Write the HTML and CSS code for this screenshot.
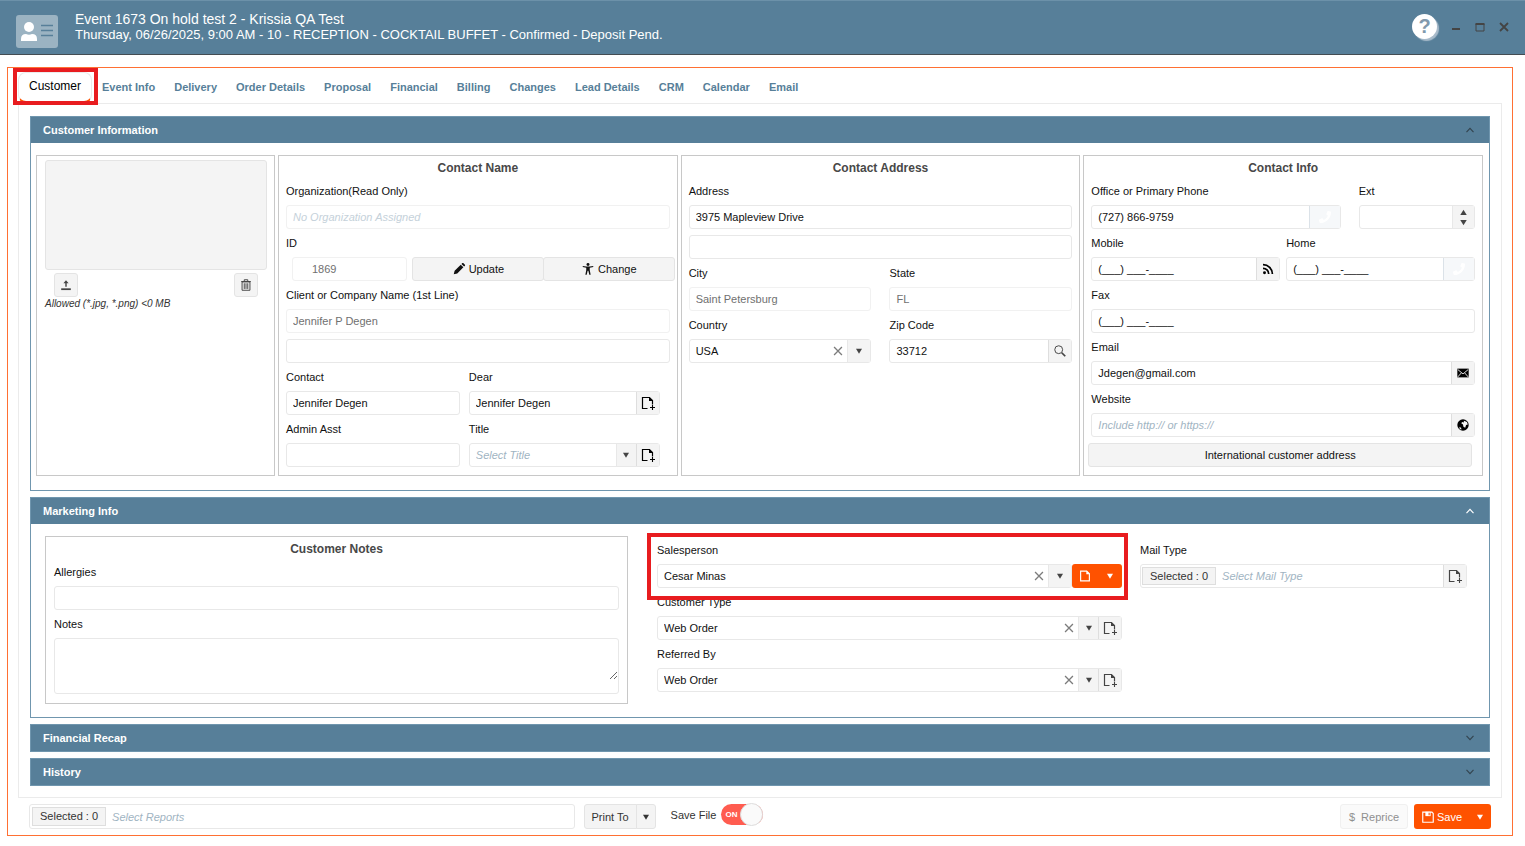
FILE: index.html
```html
<!DOCTYPE html>
<html lang="en">
<head>
  <meta charset="UTF-8">
  <meta name="viewport" content="width=device-width, initial-scale=1.0">
  <title>Event 1673 - Customer</title>
  <link rel="stylesheet" href="styles.css">
</head>
<body>
  <!-- icon set -->
  <svg class="sprite" aria-hidden="true">
    <symbol id="i-add" viewBox="0 0 16 16"><path d="M7.500 13.500h-5v-11h7l3 3v4" fill="none" stroke="currentColor" stroke-width="1.200"/><path d="M9 2v4h4z" fill="currentColor"/><path d="M12.500 10v5M10 12.500h5" stroke="currentColor" stroke-width="1.100"/></symbol>
    <symbol id="i-file" viewBox="0 0 16 16"><path d="M3 2.500h7l3 3v8H3z" fill="none" stroke="currentColor" stroke-width="1.300"/><path d="M9.500 2v4h4z" fill="currentColor"/></symbol>
    <symbol id="i-down" viewBox="0 0 16 16"><path d="M4 5h8l-4 6.500z" fill="currentColor"/></symbol>
    <symbol id="i-x" viewBox="0 0 16 16"><path d="M3.500 3.500l9 9M12.500 3.500l-9 9" fill="none" stroke="currentColor" stroke-width="1.500"/></symbol>
    <symbol id="i-chev" viewBox="0 0 16 16"><path d="M4 10.500l4-4.500 4 4.500" fill="none" stroke="currentColor" stroke-width="1.300"/></symbol>
    <symbol id="i-phone" viewBox="0 0 512 512"><path d="M493.400 24.600l-104-24c-11.300-2.600-22.900 3.300-27.500 13.900l-48 112c-4.200 9.800-1.400 21.300 6.900 28l60.600 49.600c-36 76.700-98.900 140.500-177.200 177.200l-49.600-60.600c-6.800-8.300-18.200-11.100-28-6.900l-112 48C3.900 366.500-2 378.100.6 389.400l24 104C27.100 504.200 36.700 512 48 512c256.100 0 464-207.500 464-464 0-11.200-7.700-20.900-18.600-23.400z" fill="currentColor"/></symbol>
    <symbol id="i-rss" viewBox="0 0 16 16"><circle cx="4" cy="12.300" r="1.700" fill="currentColor"/><path d="M2.300 7.200a6.500 6.500 0 0 1 6.500 6.500M2.300 3a10.700 10.700 0 0 1 10.700 10.700" fill="none" stroke="currentColor" stroke-width="2"/></symbol>
    <symbol id="i-mail" viewBox="0 0 16 16"><rect x="1.500" y="3" width="13" height="10" fill="currentColor"/><path d="M2 4l6 5 6-5M2 12.500l4-4.500M14 12.500L10 8" fill="none" stroke="#f4f4f4"/></symbol>
    <symbol id="i-globe" viewBox="0 0 16 16"><circle cx="8" cy="8" r="6.500" fill="currentColor"/><path d="M9 3l3.500 1.500 1 3-2 .5-1 3-2-1-.5-2.500-2-1.500 1-1.500L9 5zM4 10l2 1.500v2L4 12z" fill="#f4f4f4"/></symbol>
    <symbol id="i-search" viewBox="0 0 16 16"><circle cx="6.500" cy="6.500" r="4.500" fill="none" stroke="currentColor" stroke-width="1.100"/><path d="M10 10l4 4" stroke="currentColor" stroke-width="2"/></symbol>
    <symbol id="i-pencil" viewBox="0 0 16 16"><path d="M2 14l1-4 7-7 3 3-7 7zM10.800 2.200l1-1q.5-.4 1 0l2 2q.4.500 0 1l-1 1z" fill="currentColor"/></symbol>
    <symbol id="i-person" viewBox="0 0 16 16"><circle cx="8" cy="2.800" r="1.700" fill="currentColor"/><path d="M2 4.500l4 .5h4l4-.5v1.300l-4 .8V9l1 5.500H9.500L8.400 10h-.8L6.500 14.500H5L6 9V6.600l-4-.8z" fill="currentColor"/></symbol>
    <symbol id="i-upload" viewBox="0 0 16 16"><path d="M7.200 10V6H5l3-3.500L11 6H8.800v4z" fill="currentColor"/><path d="M2.500 12.800h11" stroke="currentColor" stroke-width="2"/></symbol>
    <symbol id="i-trash" viewBox="0 0 16 16"><path d="M3.500 4.500h9v9.500h-9zM2.500 4h11M6 3.500V2h4v1.500M6 6v6.500M8 6v6.500M10 6v6.500" fill="none" stroke="currentColor" stroke-width="1.100"/></symbol>
    <symbol id="i-save" viewBox="0 0 16 16"><path d="M2 2.500h10.500l1.500 1.500v10H2z" fill="none" stroke="currentColor" stroke-width="1.300"/><path d="M5 2h6v5H5z" fill="currentColor"/><path d="M9.300 3v3" stroke="#ff5200" stroke-width="1.300"/></symbol>
  </svg>

  <header class="titlebar">
    <svg class="card-icon" viewBox="0 0 42 33" aria-hidden="true">
      <rect width="42" height="33" rx="3" fill="#9bb3c2"/>
      <circle cx="13" cy="12" r="5" fill="#fff"/>
      <path d="M5 26v-2q0-5 5-5 3 1.500 6 0 5 0 5 5v2z" fill="#fff"/>
      <path d="M25 10.500h12M25 15.500h12M25 20.500h12" stroke="#577f99" stroke-width="1.600"/>
    </svg>
    <div class="event-title">
      <h1>Event 1673 On hold test 2 - Krissia QA Test</h1>
      <p>Thursday, 06/26/2025, 9:00 AM - 10 - RECEPTION - COCKTAIL BUFFET - Confirmed - Deposit Pend.</p>
    </div>
    <div class="window-actions">
      <button type="button" class="help" aria-label="Help">?</button>
      <button type="button" aria-label="Minimize"><svg viewBox="0 0 10 10"><path d="M1 7h8" stroke="currentColor" stroke-width="2"/></svg></button>
      <button type="button" aria-label="Maximize"><svg viewBox="0 0 10 10"><path d="M1 2h8v7H1z" fill="none" stroke="currentColor"/><path d="M.5 2h9" stroke="currentColor" stroke-width="2"/></svg></button>
      <button type="button" aria-label="Close"><svg viewBox="0 0 10 10"><path d="M1 1l8 8M9 1l-8 8" stroke="currentColor" stroke-width="1.800"/></svg></button>
    </div>
  </header>

  <main class="frame">
    <nav class="tabs">
      <a href="#customer" class="active highlight">Customer</a>
      <a href="#event">Event Info</a>
      <a href="#delivery">Delivery</a>
      <a href="#order">Order Details</a>
      <a href="#proposal">Proposal</a>
      <a href="#financial">Financial</a>
      <a href="#billing">Billing</a>
      <a href="#changes">Changes</a>
      <a href="#lead">Lead Details</a>
      <a href="#crm">CRM</a>
      <a href="#calendar">Calendar</a>
      <a href="#email">Email</a>
    </nav>

    <div class="tab-content" id="customer">
      <section class="panel">
        <h2><button type="button">Customer Information <svg class="icon"><use href="#i-chev"/></svg></button></h2>
        <div class="info-grid">
          <div class="box photo">
            <div class="photo-area"></div>
            <div class="photo-actions">
              <button type="button" class="btn icon-btn" aria-label="Upload"><svg class="icon"><use href="#i-upload"/></svg></button>
              <button type="button" class="btn icon-btn" aria-label="Delete"><svg class="icon"><use href="#i-trash"/></svg></button>
            </div>
            <p>Allowed (*.jpg, *.png) &lt;0 MB</p>
          </div>

          <div class="box">
            <h3>Contact Name</h3>
            <label for="org">Organization(Read Only)</label>
            <div class="control disabled"><input id="org" type="text" placeholder="No Organization Assigned" disabled></div>
            <label for="cid">ID</label>
            <div class="id-row">
              <div class="control disabled"><input id="cid" type="text" value="1869" disabled></div>
              <button type="button" class="btn"><svg class="icon"><use href="#i-pencil"/></svg>Update</button>
              <button type="button" class="btn"><svg class="icon"><use href="#i-person"/></svg>Change</button>
            </div>
            <label for="client">Client or Company Name (1st Line)</label>
            <div class="control disabled"><input id="client" type="text" value="Jennifer P Degen" disabled></div>
            <div class="control second"><input type="text" aria-label="Client name, second line"></div>
            <div class="row contact-row">
              <div>
                <label for="contact">Contact</label>
                <div class="control"><input id="contact" type="text" value="Jennifer Degen"></div>
              </div>
              <div>
                <label for="dear">Dear</label>
                <div class="control"><input id="dear" type="text" value="Jennifer Degen"><button type="button" class="addon" aria-label="Add greeting"><svg class="icon add"><use href="#i-add"/></svg></button></div>
              </div>
              <div>
                <label for="admin">Admin Asst</label>
                <div class="control"><input id="admin" type="text"></div>
              </div>
              <div>
                <label for="title">Title</label>
                <div class="control">
                  <select id="title" class="empty"><option>Select Title</option></select>
                  <button type="button" class="arrow" aria-label="Open titles"><svg class="icon"><use href="#i-down"/></svg></button>
                  <button type="button" class="addon" aria-label="Add title"><svg class="icon add"><use href="#i-add"/></svg></button>
                </div>
              </div>
            </div>
          </div>

          <div class="box">
            <h3>Contact Address</h3>
            <label for="address">Address</label>
            <div class="control"><input id="address" type="text" value="3975 Mapleview Drive"></div>
            <div class="control second"><input type="text" aria-label="Address, second line"></div>
            <div class="row address-row">
              <div>
                <label for="city">City</label>
                <div class="control disabled"><input id="city" type="text" value="Saint Petersburg" disabled></div>
              </div>
              <div>
                <label for="state">State</label>
                <div class="control disabled"><input id="state" type="text" value="FL" disabled></div>
              </div>
              <div>
                <label for="country">Country</label>
                <div class="control">
                  <select id="country"><option>USA</option></select>
                  <button type="button" class="clear" aria-label="Clear country"><svg class="icon"><use href="#i-x"/></svg></button>
                  <button type="button" class="arrow wide" aria-label="Open countries"><svg class="icon"><use href="#i-down"/></svg></button>
                </div>
              </div>
              <div>
                <label for="zip">Zip Code</label>
                <div class="control"><input id="zip" type="text" value="33712"><button type="button" class="addon gray" aria-label="Search zip"><svg class="icon"><use href="#i-search"/></svg></button></div>
              </div>
            </div>
          </div>

          <div class="box">
            <h3>Contact Info</h3>
            <div class="row phone-row">
              <div>
                <label for="office">Office or Primary Phone</label>
                <div class="control"><input id="office" type="tel" value="(727) 866-9759"><button type="button" class="addon call" aria-label="Call office" disabled><svg class="icon small"><use href="#i-phone"/></svg></button></div>
              </div>
              <div>
                <label for="ext">Ext</label>
                <div class="control">
                  <input id="ext" type="text">
                  <div class="spinner">
                    <button type="button" aria-label="Increase"><svg class="icon flip"><use href="#i-down"/></svg></button>
                    <button type="button" aria-label="Decrease"><svg class="icon"><use href="#i-down"/></svg></button>
                  </div>
                </div>
              </div>
            </div>
            <div class="row mobile-row">
              <div>
                <label for="mobile">Mobile</label>
                <div class="control"><input id="mobile" type="tel" value="(___) ___-____"><button type="button" class="addon" aria-label="Text mobile"><svg class="icon"><use href="#i-rss"/></svg></button></div>
              </div>
              <div>
                <label for="home">Home</label>
                <div class="control"><input id="home" type="tel" value="(___) ___-____"><button type="button" class="addon call" aria-label="Call home" disabled><svg class="icon small"><use href="#i-phone"/></svg></button></div>
              </div>
            </div>
            <label for="fax">Fax</label>
            <div class="control"><input id="fax" type="tel" value="(___) ___-____"></div>
            <label for="mail">Email</label>
            <div class="control"><input id="mail" type="email" value="Jdegen@gmail.com"><button type="button" class="addon" aria-label="Send email"><svg class="icon"><use href="#i-mail"/></svg></button></div>
            <label for="website">Website</label>
            <div class="control"><input id="website" type="url" placeholder="Include http:// or https://"><button type="button" class="addon" aria-label="Open website"><svg class="icon"><use href="#i-globe"/></svg></button></div>
            <button type="button" class="btn international">International customer address</button>
          </div>
        </div>
      </section>

      <section class="panel">
        <h2><button type="button">Marketing Info <svg class="icon light"><use href="#i-chev"/></svg></button></h2>
        <div class="marketing-grid">
          <div class="box notes">
            <h3>Customer Notes</h3>
            <label for="allergies">Allergies</label>
            <div class="control"><input id="allergies" type="text"></div>
            <label for="notes">Notes</label>
            <div class="control area"><textarea id="notes"></textarea></div>
          </div>

          <div>
            <div class="sales highlight">
              <label for="sales">Salesperson</label>
              <div class="split">
                <div class="control">
                  <select id="sales"><option>Cesar Minas</option></select>
                  <button type="button" class="clear" aria-label="Clear salesperson"><svg class="icon"><use href="#i-x"/></svg></button>
                  <button type="button" class="arrow wide" aria-label="Open salespeople"><svg class="icon"><use href="#i-down"/></svg></button>
                </div>
                <button type="button" class="primary" aria-label="New salesperson"><svg class="icon"><use href="#i-file"/></svg></button>
                <button type="button" class="primary" aria-label="More salesperson options"><svg class="icon small"><use href="#i-down"/></svg></button>
              </div>
            </div>
            <label for="ctype">Customer Type</label>
            <div class="control">
              <select id="ctype"><option>Web Order</option></select>
              <button type="button" class="clear" aria-label="Clear customer type"><svg class="icon"><use href="#i-x"/></svg></button>
              <button type="button" class="arrow" aria-label="Open customer types"><svg class="icon"><use href="#i-down"/></svg></button>
              <button type="button" class="addon gray" aria-label="Add customer type"><svg class="icon add"><use href="#i-add"/></svg></button>
            </div>
            <label for="referred">Referred By</label>
            <div class="control">
              <select id="referred"><option>Web Order</option></select>
              <button type="button" class="clear" aria-label="Clear referred by"><svg class="icon"><use href="#i-x"/></svg></button>
              <button type="button" class="arrow" aria-label="Open referrals"><svg class="icon"><use href="#i-down"/></svg></button>
              <button type="button" class="addon gray" aria-label="Add referral"><svg class="icon add"><use href="#i-add"/></svg></button>
            </div>
          </div>

          <div>
            <label for="mailtype">Mail Type</label>
            <div class="control">
              <span class="chip">Selected : 0</span>
              <input id="mailtype" type="text" placeholder="Select Mail Type">
              <button type="button" class="addon gray" aria-label="Add mail type"><svg class="icon add"><use href="#i-add"/></svg></button>
            </div>
          </div>
        </div>
      </section>

      <section class="panel">
        <h2><button type="button">Financial Recap <svg class="icon flip"><use href="#i-chev"/></svg></button></h2>
      </section>

      <section class="panel">
        <h2><button type="button">History <svg class="icon flip"><use href="#i-chev"/></svg></button></h2>
      </section>
    </div>

    <footer class="actions">
      <div class="control reports">
        <span class="chip">Selected : 0</span>
        <input type="text" placeholder="Select Reports" aria-label="Reports">
      </div>
      <div class="split print">
        <button type="button" class="btn">Print To</button>
        <button type="button" class="btn" aria-label="Print options"><svg class="icon small"><use href="#i-down"/></svg></button>
      </div>
      <label class="save-file">Save File
        <input type="checkbox" checked>
        <span class="track">ON</span>
      </label>
      <button type="button" class="btn reprice" disabled><span>$</span>Reprice</button>
      <div class="split">
        <button type="button" class="primary save"><svg class="icon"><use href="#i-save"/></svg>Save</button>
        <button type="button" class="primary" aria-label="Save options"><svg class="icon small"><use href="#i-down"/></svg></button>
      </div>
    </footer>
  </main>
</body>
</html>
```
FILE: styles.css
```css
* {
  box-sizing: border-box;
}

body {
  margin: 0;
  background: #fff;
  color: #111;
  font-family: "Liberation Sans", Arial, sans-serif;
  font-size: 11px;
}

h1, h2, h3, p {
  margin: 0;
}

button, input, select, textarea {
  font: inherit;
  color: inherit;
}

button {
  display: flex;
  align-items: center;
  justify-content: center;
  margin: 0;
  padding: 0;
  border: 0;
  background: none;
}

.sprite {
  display: none;
}

.icon {
  width: 14px;
  height: 14px;
  flex: none;
}

.icon.add {
  width: 16px;
  height: 16px;
}

.flip {
  transform: rotate(180deg);
}

/* window title */
.titlebar {
  display: flex;
  align-items: flex-start;
  height: 55px;
  padding: 10px 16px 0;
  background: #577f99;
  border-top: 1px solid #6c91a9;
  border-bottom: 1px solid #444c52;
  color: #fff;
}

.card-icon {
  width: 42px;
  height: 33px;
  margin-top: 4px;
}

.event-title {
  flex: 1;
  margin-left: 17px;
  font-size: 13px;
  line-height: 16px;
}

.event-title h1 {
  font-size: 14px;
  font-weight: normal;
}

.window-actions {
  display: flex;
  align-items: center;
  gap: 14px;
  margin-top: 3px;
  color: #444;
}

.window-actions svg {
  width: 10px;
  height: 10px;
}

.window-actions .help {
  width: 25px;
  height: 25px;
  border-radius: 50%;
  background: #fff;
  box-shadow: 2px 2px 1px #a9bccb;
  color: #8199ad;
  font-size: 20px;
  font-weight: bold;
}

/* tabs */
.frame {
  margin: 12px 12px 9px 7px;
  padding: 0 10px;
  border: 1px solid #ff7033;
}

.tabs {
  display: flex;
  padding-top: 4px;
}

.tabs a {
  height: 31px;
  padding: 0 9px 0 10px;
  color: #577f99;
  font-weight: bold;
  line-height: 31px;
  text-decoration: none;
}

.tabs .active {
  padding: 0 10px;
  border: 1px solid #ebebeb;
  border-bottom: 2px solid #ff5200;
  border-radius: 8px;
  color: #000;
  font-size: 12px;
  font-weight: normal;
  line-height: 27px;
}

.highlight {
  position: relative;
}

.highlight::after {
  content: "";
  position: absolute;
  border: 4px solid #e81c1f;
  pointer-events: none;
}

.tabs .highlight::after {
  inset: -5px -7px -4px -6px;
}

.sales.highlight::after {
  inset: -3px -6px -12px -10px;
}

.tab-content {
  display: flex;
  flex-direction: column;
  gap: 6px;
  padding: 12px 11px 11px;
  border: 1px solid #ebebeb;
}

/* collapsible panels */
.panel {
  border: 1px solid #7096ae;
}

.panel h2 {
  font-size: 11px;
}

.panel h2 button {
  justify-content: space-between;
  width: 100%;
  height: 26px;
  padding: 0 12px;
  background: #577f99;
  color: #fff;
  font-weight: bold;
}

.panel h2 .icon {
  color: #33444f;
}

.panel h2 .light {
  color: #fff;
}

.info-grid {
  display: grid;
  grid-template-columns: 239px 1fr 1fr 1fr;
  gap: 3px;
  padding: 12px 6px 14px 5px;
}

.marketing-grid {
  display: grid;
  grid-template-columns: 594fr 465fr 327fr;
  column-gap: 18px;
  padding: 12px 22px 13px 14px;
}

.box {
  min-width: 0;
  padding: 0 7px 8px;
  border: 1px solid #c8c8c8;
}

.box h3 {
  height: 21px;
  color: #484848;
  font-size: 12px;
  line-height: 24px;
  text-align: center;
}

.notes {
  margin-right: 11px;
  padding: 0 8px 9px;
}

/* fields */
label {
  display: block;
  height: 28px;
  line-height: 28px;
}

.control {
  display: flex;
  height: 24px;
  background: #fff;
  border: 1px solid #e8e8e8;
  border-radius: 3px;
}

.control.second {
  margin-top: 6px;
}

.control.disabled {
  border-color: #f1f1f1;
  color: #707070;
}

.control input,
.control select,
.control textarea {
  flex: 1;
  width: 100%;
  min-width: 0;
  padding: 0 6px;
  border: 0;
  outline: 0;
  background: none;
}

.control select {
  appearance: none;
}

.control .empty,
.control input::placeholder {
  color: #9fb4c2;
  font-style: italic;
}

.control.disabled input::placeholder {
  color: #c5d1da;
}

.control.area {
  height: 56px;
}

.control textarea {
  height: 41px;
  resize: vertical;
}

.clear {
  width: 18px;
  color: #7c7c7c;
}

.arrow {
  width: 20px;
  background: #f4f4f4;
  border-left: 1px solid #e8e8e8;
  color: #444;
}

.arrow.wide {
  width: 23px;
}

.arrow .icon,
.icon.small {
  width: 12px;
  height: 12px;
}

.addon {
  width: 23px;
  background: #f4f4f4;
  border-left: 1px solid #dedede;
  color: #000;
}

.addon.gray {
  color: #444;
}

.addon.call {
  width: 31px;
  background: #f6f8fa;
  border-left-color: #dbe2e8;
  color: #fff;
}

.spinner {
  width: 22px;
  padding: 1px 0;
  background: #f4f4f4;
  border-left: 1px solid #e8e8e8;
  color: #444;
}

.spinner button {
  width: 100%;
  height: 10px;
}

.spinner .icon {
  width: 13px;
  height: 13px;
}

.chip {
  margin: 2px 0 2px 1px;
  padding: 0 7px;
  background: #f4f4f4;
  border: 1px solid #dedede;
  color: #333;
  line-height: 16px;
  white-space: nowrap;
}

.btn {
  height: 24px;
  background: #f4f4f4;
  border: 1px solid #e4e4e4;
  border-radius: 3px;
}

.btn .icon {
  margin-right: 3px;
}

.icon-btn {
  width: 24px;
  color: #444;
}

.icon-btn .icon {
  margin: 0;
}

.primary {
  width: 25px;
  background: #ff5200;
  color: #fff;
}

.split {
  display: flex;
}

.split .control {
  flex: 1;
}

.split > button:nth-last-child(2) {
  border-radius: 3px 0 0 3px;
}

.split > button:last-child {
  border-radius: 0 3px 3px 0;
}

.photo {
  padding: 4px 7px 0 8px;
}

.photo-area {
  height: 110px;
  background: #f4f4f4;
  border: 1px solid #e4e4e4;
  border-radius: 3px;
}

.photo-actions {
  display: flex;
  justify-content: space-between;
  padding: 3px 9px 0;
}

.photo p {
  color: #333;
  font-size: 10px;
  font-style: italic;
  line-height: 13px;
}

.id-row {
  display: flex;
  margin: 0 -5px 0 6px;
}

.id-row .control {
  width: 115px;
  margin-right: 5px;
}

.id-row input {
  padding-left: 19px;
}

.id-row .btn {
  flex: 1;
}

.id-row .btn + .btn {
  margin-left: -1px;
}

.row {
  display: grid;
}

.contact-row {
  grid-template-columns: 174fr 191fr;
  column-gap: 9px;
  padding-right: 10px;
}

.address-row {
  grid-template-columns: 1fr 1fr;
  column-gap: 18px;
}

.phone-row {
  grid-template-columns: 249fr 116fr;
  column-gap: 18px;
}

.mobile-row {
  grid-template-columns: 1fr 1fr;
  column-gap: 6px;
}

.international {
  width: 100%;
  margin: 6px 0 0 -3px;
}

/* bottom bar */
.actions {
  display: flex;
  padding: 6px 11px;
}

.actions .btn,
.actions .primary,
.reports {
  height: 25px;
}

.reports {
  flex: 0 0 calc(38% - 10px);
}

.reports .chip {
  margin-left: 2px;
}

.print {
  margin: 0 15px 0 9px;
  color: #333;
}

.print .btn:first-child {
  width: 53px;
}

.print .btn:last-child {
  width: 20px;
  margin-left: -1px;
}

.print .icon {
  margin: 0;
}

.save-file {
  display: flex;
  align-items: center;
  gap: 5px;
  height: 21px;
  color: #333;
}

.save-file input {
  position: absolute;
  opacity: 0;
}

.track {
  display: flex;
  align-items: center;
  width: 42px;
  height: 21px;
  padding-left: 4px;
  background: #ff5c50;
  border-radius: 11px;
  color: #fff;
  font-size: 8px;
  font-weight: bold;
}

.track::after {
  content: "";
  width: 21px;
  height: 21px;
  margin-left: auto;
  background: #fafafa;
  border: 1px solid #ddd;
  border-radius: 50%;
}

.reprice {
  gap: 6px;
  width: 68px;
  margin: 0 6px 0 auto;
  background: #fafafa;
  border-color: #f0f0f0;
  color: #8f8f8f;
}

.primary.save {
  gap: 2px;
  width: 55px;
}

.save + .primary {
  width: 22px;
}
```
